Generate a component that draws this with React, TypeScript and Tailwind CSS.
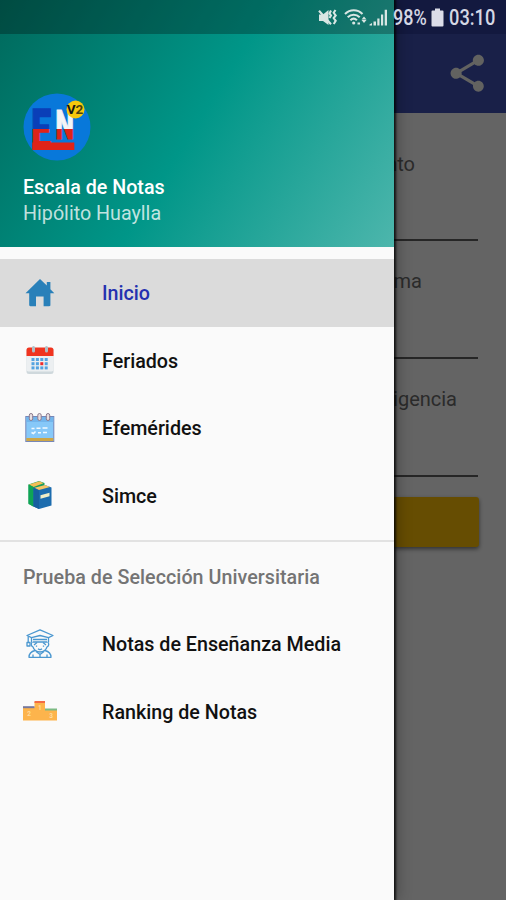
import type { ReactNode } from "react";
import { MdShare } from "react-icons/md";

const BLUE = "#2980b9";

function AppLogo() {
  return (
    <svg width="68" height="68" viewBox="0 0 68 68" className="block overflow-visible">
      <defs>
        {/* gradients run in the letters' own units, baseline at 0 */}
        <linearGradient id="flagE" gradientUnits="userSpaceOnUse" x1="0" y1="-40" x2="0" y2="0">
          <stop offset="0.49" stopColor="#0a3fb8" />
          <stop offset="0.49" stopColor="#df2318" />
        </linearGradient>
        <linearGradient id="flagN" gradientUnits="userSpaceOnUse" x1="0" y1="-30" x2="0" y2="0">
          <stop offset="0.65" stopColor="#f4f4f6" />
          <stop offset="0.65" stopColor="#df2318" />
        </linearGradient>
      </defs>
      <circle cx="34" cy="34" r="33.5" fill="#0878da" />
      <g fontFamily="Roboto, sans-serif" fontWeight="900">
        <text
          transform="translate(8.2 56.3) scale(0.64 1)"
          fontSize="55"
          fill="url(#flagE)"
          stroke="url(#flagE)"
          strokeWidth="1.5"
        >
          E
        </text>
        <text
          transform="translate(32.6 46.300) scale(0.63 1)"
          fontSize="41.500"
          fill="url(#flagN)"
          stroke="url(#flagN)"
          strokeWidth="1"
        >
          N
        </text>
      </g>
      <rect x="9.300" y="49.500" width="42" height="7.500" fill="#df2318" />
      <circle cx="52.500" cy="16.500" r="9" fill="#f8c80c" />
      <text x="52" y="21.3" textAnchor="middle" fontFamily="Roboto, sans-serif" fontWeight="700" fontSize="13.5">
        <tspan fill="#151515">V</tspan>
        <tspan fill="#4a4210">2</tspan>
      </text>
    </svg>
  );
}

function HomeIcon() {
  return (
    <svg width="34" height="34" viewBox="0 0 34 34">
      <path d="M17 3 2.5 17.3h3.7V29c0 .8.4 1.2 1.2 1.2h5.6V20.4h7.6v9.8h5.6c.8 0 1.2-.4 1.2-1.2V17.3h3.9l-3.9-4V6h-3.6v3.6z" fill={BLUE} />
    </svg>
  );
}

function HolidayIcon() {
  return (
    <svg width="34" height="34" viewBox="0 0 34 34">
      <rect x="3.5" y="5" width="27" height="26" rx="2.5" fill="#cfd8dc" />
      <rect x="3.5" y="5" width="27" height="23.5" rx="2" fill="#eceff1" />
      <path d="M3.5 13V7a2.5 2.5 0 0 1 2.5-2.5h22A2.5 2.5 0 0 1 30.5 7v6z" fill="#f0341f" />
      <path d="M10.5 4.5V8M23.5 4.5V8" stroke="#b0bec5" strokeWidth="3" strokeLinecap="round" />
      {[16.5, 20.7, 24.9].map((y) =>
        [10, 14.4, 18.8, 23.2].map((x) => (
          <rect
            key={`${x}-${y}`}
            x={x - 1.5}
            y={y - 1.5}
            width="3"
            height="3"
            fill={x === 18.8 && y === 20.7 ? "#ef2b2b" : "#55a3e0"}
          />
        )),
      )}
    </svg>
  );
}

function EventsIcon() {
  return (
    <svg width="34" height="34" viewBox="0 0 34 34">
      <rect x="2.8" y="5.5" width="28" height="25" fill="#86c8f8" stroke="#7787b8" strokeWidth="1" />
      <rect x="3.3" y="6" width="27" height="5" fill="#72b5ec" />
      <rect x="3.3" y="27" width="27" height="3" fill="#cda647" />
      {[8, 16.5, 25].map((x) => (
        <rect key={x} x={x - 1.7} y="2.5" width="3.4" height="7" rx="1.7" fill="#e7dfe2" stroke="#8d7b8d" strokeWidth="1" />
      ))}
      <path d="M8.5 17.5h3M13.5 17.3h4M19.5 17h5M8.5 21.5l2 1 2-2M15 21.7h3M20 21.4h4" stroke="#f2faff" strokeWidth="1.5" fill="none" />
    </svg>
  );
}

function BooksIcon() {
  return (
    <svg width="34" height="34" viewBox="0 0 34 34">
      <path d="M5.500 6.500 16 3l5.500 2v20L10 28.500l-4.500-3z" fill="#14a05a" />
      <path d="m6 6.500 10.500-3.300 4 2L10.500 9z" fill="#f3bd55" />
      <path d="M5.500 6.500 10.500 9v19.500l-5-2.500z" fill="#0fa455" />
      <path d="M10.500 10 22 7l6.500 2.500v18L16 31l-5.500-2.500z" fill="#1c6cae" />
      <path d="m11.500 9.700 10.500-2.700 5 2-11 3z" fill="#f5c564" />
      <path d="m10.500 10 5.500 2.500V31l-5.500-2.500z" fill="#175f9f" />
      <path d="m17.500 17.200 9-2.400v3.500l-9 2.400z" fill="#f1edc6" />
    </svg>
  );
}

function StudentIcon() {
  return (
    <svg width="34" height="34" viewBox="0 0 34 34" fill="none" stroke="#4a97d0" strokeWidth="1.3" strokeLinejoin="round">
      <path d="M17 2.8 4 8.5l4.500 2.200L17 8.500l8.500 2.200L30 8.500z" />
      <path d="M8.5 10.7v4.500M25.5 10.7v4.500M10 12.500h14M10 15h14M5.200 9.500v6M4 15.500h3v3.500H4z" />
      <path d="M9.5 15c-1.800 1-1.600 4.400.4 4.800C11 23.200 13.800 25 17 25s6-1.800 7.100-5.200c2-.4 2.200-3.800.4-4.800" />
      <path d="m11 18 3-2.500M23 18l-3-2.500M13.500 18.500v1.300M20.500 18.500v1.300M15 21.800c1.200 1 2.800 1 4 0" />
      <path d="M12 23.500C8 24.500 6 26.500 6 30.300h22c0-3.800-2-5.800-6-6.800" />
      <path d="m13 24.500 4 3 4-3M17 27.500v2.800M10 27.500v2.800M24 27.500v2.800" />
    </svg>
  );
}

function PodiumIcon() {
  return (
    <svg width="34" height="34" viewBox="0 0 34 34">
      <path d="M0 13.500h11.500V8h10.500v8h12v10.500H0z" fill="#fdb44c" />
      <rect y="12.200" width="11.500" height="2" fill="#77789c" />
      <rect x="11.500" y="7" width="10.500" height="2" fill="#f26a45" />
      <rect x="22" y="14.500" width="12" height="2" fill="#7cba83" />
      <g fill="#ffdb9d" fontFamily="Roboto, sans-serif" fontWeight="700" fontSize="6.5" textAnchor="middle">
        <text x="6" y="21.500">2</text>
        <text x="16.8" y="16">1</text>
        <text x="28" y="24">3</text>
      </g>
    </svg>
  );
}

function StatusIcons() {
  return (
    <svg width="72" height="20" viewBox="0 0 72 20" fill="#d8e6e3">
      {/* muted + vibrate */}
      <path d="M1 6.5h4L10.500 2v15L5 13H1z" />
      <path d="m1 2.800 12 13.500M13 2.500l-1.500 3 1.500 2-1.500 2.500M17.500 2l-1.800 2.800 2 2.700-2 2.600 2 2.700-2 3.200" fill="none" stroke="#d8e6e3" strokeWidth="2.1" />
      {/* wifi */}
      <g fill="none" stroke="#d8e6e3" strokeWidth="2.1">
        <path d="M27 6c5-5 12.500-5 17.500 0" />
        <path d="M29.700 9.300c3.500-3.500 8.500-3.500 12 0" />
        <path d="M32.400 12.300c2-2 4.500-2 6.500 0" />
      </g>
      <circle cx="35.700" cy="15" r="1.600" />
      <path d="m46 8.500 2.500 3h-5zM46 15l2.500-3h-5zM39.500 14.500h2.500v2h-2.500z" />
      {/* signal */}
      <path d="M51.500 16.500 54 15v2.500h-2.500zM55.500 13.500H58v4h-2.500zM59.300 10.500h2.200v7h-2.200zM63 6.500h2.200v11H63zM66.700 1.800H69v15.700h-2.300z" />
    </svg>
  );
}

function Field({ label, className }: { label: string; className: string }) {
  return (
    <div className="h-[118px] border-b-2 border-[#606060]">
      <p className={`text-right text-[20px] leading-6 text-[#6c6c6c] ${className}`}>{label}</p>
    </div>
  );
}

function NavItem({ icon, label, active }: { icon: ReactNode; label: string; active?: boolean }) {
  return (
    <a
      className={`flex h-[67.5px] items-center gap-[45px] pl-[23px] text-[19.7px] font-medium ${
        active ? "bg-[#dbdbdb] text-[#2431b0]" : "text-[#111]"
      }`}
    >
      <span className="flex size-[34px] shrink-0">{icon}</span>
      <span className="pt-[3px]">{label}</span>
    </a>
  );
}

function Drawer() {
  return (
    <aside className="absolute inset-y-0 left-0 w-[394px] bg-[#fafafa] shadow-[1px_0_2px_1px_rgba(0,0,0,0.75),3px_0_14px_rgba(0,0,0,0.3)]">
      <header className="flex h-[247px] flex-col bg-[linear-gradient(122.1deg,#00695c_0%,#009688_50%,#4db6ac_100%)] pl-[23px]">
        <div className="-ml-[23px] h-[34px] shrink-0 bg-black/28" />
        <div className="mt-[59px]">
          <AppLogo />
        </div>
        <p className="mt-[13px] text-[19.7px] font-medium leading-[27px] text-white">Escala de Notas</p>
        <p className="text-[19.7px] leading-[26px] text-white/75">Hipólito Huaylla</p>
      </header>
      <nav className="pt-[12px]">
        <NavItem icon={<HomeIcon />} label="Inicio" active />
        <NavItem icon={<HolidayIcon />} label="Feriados" />
        <NavItem icon={<EventsIcon />} label="Efemérides" />
        <NavItem icon={<BooksIcon />} label="Simce" />
        <div className="mt-[11px] h-[2px] bg-[#e2e2e2]" />
        <p className="flex h-[68px] items-center pl-[23px] pt-[3px] text-[19.7px] font-medium tracking-[0.04px] text-[#747474]">
          Prueba de Selección Universitaria
        </p>
        <NavItem icon={<StudentIcon />} label="Notas de Enseñanza Media" />
        <NavItem icon={<PodiumIcon />} label="Ranking de Notas" />
      </nav>
    </aside>
  );
}

export default function App() {
  return (
    <div className="relative h-[900px] w-[506px] overflow-hidden bg-[#fafafa] font-[Roboto,sans-serif]">
      <div className="h-[34px] bg-[#303f9f]" />
      <div className="flex h-[79px] items-center justify-end bg-[#3f51b5] pr-[17px]">
        <MdShare size={44.5} className="text-[#f4f4f0]" />
      </div>
      <main className="px-[28px] pt-[10px]">
        <Field label="nto" className="pr-[63px] pt-[29px]" />
        <Field label="ma" className="pr-[56px] pt-[28px]" />
        <Field label="igencia" className="pr-[21px] pt-[28px]" />
        <div className="-mr-px mt-[20px] h-[50px] rounded-[3px] bg-[#ffc107] shadow-[0_2px_4px_rgba(0,0,0,0.5)]" />
      </main>

      <div className="absolute inset-0 bg-black/60" />
      <Drawer />

      {/* system status bar sits above the drawer */}
      <div className="absolute inset-x-0 top-0 flex h-[34px] items-center pl-[318px] pt-px text-[22px] font-medium text-[#d5d7e4]">
        <StatusIcons />
        <span className="ml-[3px] flex w-[35px]">
          <span className="origin-left scale-x-[0.82]">98%</span>
        </span>
        <svg width="13" height="19" viewBox="0 0 13 19" className="ml-[3px]">
          <path d="M4 .5h5v2h2.500a1 1 0 0 1 1 1v14a1 1 0 0 1-1 1h-10a1 1 0 0 1-1-1v-14a1 1 0 0 1 1-1H4z" fill="#dcdde8" />
        </svg>
        <span className="ml-[5px] origin-left scale-x-[0.83]">03:10</span>
      </div>
    </div>
  );
}
